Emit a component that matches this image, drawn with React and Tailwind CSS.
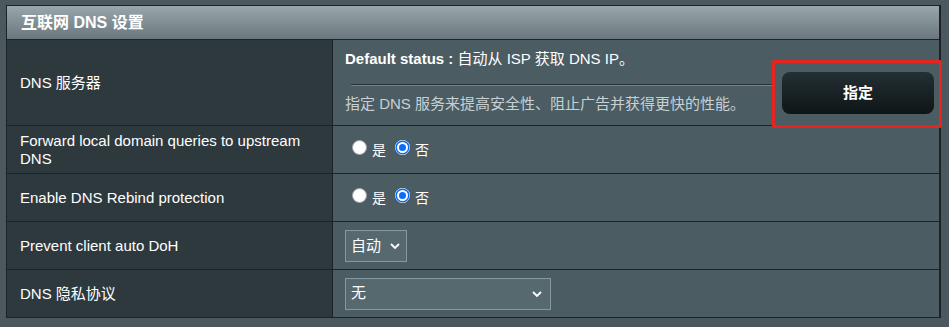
import { useState } from "react";

const font = { fontFamily: '"Liberation Sans", Arial, "Noto Sans CJK SC", sans-serif' };

const Radio = ({ checked, label, onClick }) => (
  <label className="flex items-center cursor-pointer" onClick={onClick}>
    {checked ? (
      <span className="w-[15px] h-[15px] rounded-full bg-white flex items-center justify-center">
        <span className="w-[11px] h-[11px] rounded-full bg-[#0a6cff] border-[2px] border-white ring-[1.5px] ring-[#0a6cff]" />
      </span>
    ) : (
      <span className="w-[15px] h-[15px] rounded-full bg-white border border-[#9aa4a8]" />
    )}
    <span className="ml-[5px] mt-[5px] text-[14px] text-white">{label}</span>
  </label>
);

const Chevron = () => (
  <svg width="12" height="12" viewBox="0 0 12 12" fill="none">
    <path d="M2 4l4 4 4-4" stroke="white" strokeWidth="1.8" />
  </svg>
);

const Row = ({ label, children, h = "h-[48px]" }) => (
  <div className={`grid grid-cols-[326px_1fr] border-t border-[#1c2226] ${h}`}>
    <div className="bg-[#2e393e] border-r border-[#1c2226] flex items-center pl-[13px] pr-2 text-[15px] leading-[18px] text-white">
      {label}
    </div>
    <div className="bg-[#4b5c63] flex items-center pl-[12px]">{children}</div>
  </div>
);

export default function App() {
  const [fwd, setFwd] = useState(false);
  const [rebind, setRebind] = useState(false);

  return (
    <div className="w-[949px] h-[327px] bg-[#4b585d] pt-[5px] pl-[6px]" style={font}>
      <div className="w-[935px] border border-[#1c2226] border-r-[2px]">
        <div className="h-[33px] bg-gradient-to-b from-[#99a7ac] to-[#6a777c] flex items-center pl-[14px] text-[16px] font-bold text-white">
          互联网 DNS 设置
        </div>

        <Row label="DNS 服务器" h="h-[86px]">
          <div className="flex-1 flex flex-col h-full pt-[10px]">
            <div className="text-[15px] text-white leading-[18px]">
              <span className="font-bold">Default status :</span> 自动从 ISP 获取 DNS IP。
            </div>
            <div className="ml-[6px] mt-[16px] h-[2px] border-t border-[#283034] bg-[#76858a]" />
            <div className="mt-[9px] text-[15px] leading-[18px] text-[#c9d0d3]">
              指定 DNS 服务来提高安全性、阻止广告并获得更快的性能。
            </div>
          </div>
          <div className="relative mr-[5px] ml-[8px] mt-[21px]">
            <button className="w-[152px] h-[42px] rounded-[8px] bg-gradient-to-b from-[#243035] to-[#0f1517] text-white font-bold text-[15px]">
              指定
            </button>
            <div className="absolute left-[-10px] top-[-12px] w-[170px] h-[68px] border-[3px] border-[#e8241f] rounded-[2px] pointer-events-none" />
          </div>
        </Row>

        <Row label="Forward local domain queries to upstream DNS">
          <div className="flex gap-[9px] mb-[4px] ml-[7px]">
            <Radio checked={fwd} label="是" onClick={() => setFwd(true)} />
            <Radio checked={!fwd} label="否" onClick={() => setFwd(false)} />
          </div>
        </Row>

        <Row label="Enable DNS Rebind protection">
          <div className="flex gap-[9px] mb-[4px] ml-[7px]">
            <Radio checked={rebind} label="是" onClick={() => setRebind(true)} />
            <Radio checked={!rebind} label="否" onClick={() => setRebind(false)} />
          </div>
        </Row>

        <Row label="Prevent client auto DoH">
          <div className="w-[62px] h-[32px] mt-[1px] bg-[#56696f] border border-[#8698a0] flex items-center justify-between pl-[5px] pr-[5px] text-[15px] text-white">
            自动
            <Chevron />
          </div>
        </Row>

        <Row label="DNS 隐私协议">
          <div className="w-[206px] h-[32px] bg-[#56696f] border border-[#8698a0] flex items-center justify-between pl-[5px] pr-[7px] text-[15px] text-white">
            无
            <Chevron />
          </div>
        </Row>
      </div>
    </div>
  );
}
